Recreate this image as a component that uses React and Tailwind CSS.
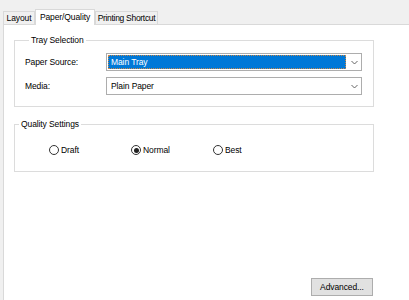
import React from 'react';

const font = { fontFamily: '"Liberation Sans", Arial, sans-serif' };

const Chevron = () => (
  <svg width="7" height="5" viewBox="0 0 7 5" className="text-[#555]">
    <path d="M0.5 1 L3.5 4 L6.5 1" fill="none" stroke="currentColor" strokeWidth="0.9" />
  </svg>
);

const Select = ({ value, focused }) => (
  <div className="w-[256px] h-[18px] border border-[#adadad] bg-white flex items-stretch">
    {focused ? (
      <div className="flex-1 m-px bg-[#0078d7] border border-dotted border-[#c7884a] flex items-center pl-[2px] text-white">
        {value}
      </div>
    ) : (
      <div className="flex-1 flex items-center pl-[4px] text-black">{value}</div>
    )}
    <div className="w-[14px] flex items-center justify-center">
      <Chevron />
    </div>
  </div>
);

const Radio = ({ label, checked }) => (
  <label className="flex items-center gap-[2px] w-[82px]">
    <span className="w-[10px] h-[10px] rounded-full border border-[#333] bg-white flex items-center justify-center">
      {checked && <span className="w-[5px] h-[5px] rounded-full bg-[#222]" />}
    </span>
    <span>{label}</span>
  </label>
);

export default function App() {
  return (
    <div style={font} className="w-[409px] h-[300px] bg-[#f0f0f0] flex flex-col pl-[3px] text-[8.5px] tracking-[-0.1px] text-black overflow-hidden">
      <div className="h-[24px] flex items-end">
        <div className="w-[32px] h-[13px] bg-[#f0f0f0] border border-b-0 border-[#d9d9d9] flex items-center justify-center whitespace-nowrap">
          Layout
        </div>
        <div className="w-[60px] h-[16px] -mb-px bg-white border border-b-0 border-[#d9d9d9] flex items-center justify-center whitespace-nowrap relative z-10">
          Paper/Quality
        </div>
        <div className="w-[63px] h-[13px] bg-[#f0f0f0] border border-b-0 border-[#d9d9d9] flex items-center justify-center whitespace-nowrap tracking-[-0.3px]">
          Printing Shortcut
        </div>
      </div>
      <div className="flex-1 bg-white border-l border-t border-[#d9d9d9] flex flex-col pl-[10px] pt-[9px]">
        <fieldset className="w-[360px] h-[73px] border border-[#dcdcdc] pl-[10px] pr-[11px]">
          <legend className="ml-[4px] px-[2px] leading-[12px]">Tray Selection</legend>
          <div className="flex flex-col gap-[6px] mt-[7px]">
            <div className="flex items-center">
              <span className="w-[81px]">Paper Source:</span>
              <Select value="Main Tray" focused />
            </div>
            <div className="flex items-center">
              <span className="w-[81px]">Media:</span>
              <Select value="Plain Paper" />
            </div>
          </div>
        </fieldset>
        <fieldset className="w-[360px] h-[54px] mt-[11px] border border-[#dcdcdc] pl-[34px]">
          <legend className="ml-[-30px] px-[2px] leading-[12px]">Quality Settings</legend>
          <div className="flex items-center mt-[14px]">
            <Radio label="Draft" />
            <Radio label="Normal" checked />
            <Radio label="Best" />
          </div>
        </fieldset>
        <div className="mt-auto mb-[4px] mr-[36px] self-end">
          <button className="w-[62px] h-[18px] bg-[#e1e1e1] border border-[#adadad] flex items-center justify-center">
            Advanced...
          </button>
        </div>
      </div>
    </div>
  );
}
